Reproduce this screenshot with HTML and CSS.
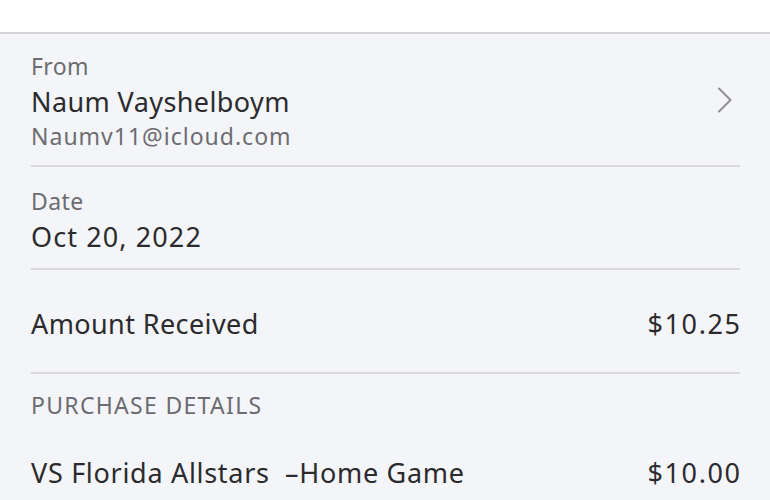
FILE: index.html
```html
<!DOCTYPE html>
<html lang="en">
<head>
<meta charset="utf-8">
<title>Payment details</title>
<link rel="stylesheet" href="styles.css">
</head>
<body>
<header class="topbar"></header>
<main class="details">
  <section class="block block-from">
    <div class="block-text">
      <div class="label">From</div>
      <div class="value">Naum Vayshelboym</div>
      <div class="sub">Naumv11@icloud.com</div>
    </div>
    <svg class="chevron" width="16" height="26" viewBox="0 0 16 26" aria-hidden="true">
      <path d="M2 1.5 L13.5 13 L2 24.5" fill="none" stroke="#8e8e93" stroke-width="2" stroke-linecap="round" stroke-linejoin="round"/>
    </svg>
  </section>
  <section class="block block-date">
    <div class="label">Date</div>
    <div class="value num">Oct 20, 2022</div>
  </section>
  <section class="block block-amount">
    <div class="value">Amount Received</div>
    <div class="value money">$10.25</div>
  </section>
  <section class="purchase">
    <div class="label caps">PURCHASE DETAILS</div>
    <div class="item-row">
      <div class="value item">VS Florida Allstars&nbsp; –Home Game</div>
      <div class="value money">$10.00</div>
    </div>
  </section>
</main>
</body>
</html>
```
FILE: styles.css
```css
html, body {
  margin: 0;
  padding: 0;
}
body {
  background: #f4f5f9;
  font-family: "Noto Sans", "Open Sans", sans-serif;
  color: #2b2b2e;
  width: 770px;
  height: 500px;
  overflow: hidden;
}
.topbar {
  height: 32px;
  background: #ffffff;
  border-bottom: 2px solid #d3d3d8;
}
.details {
  padding: 0 30px 0 31px;
}
.block {
  border-bottom: 2px solid #d9d9de;
}
.label {
  font-size: 23px;
  line-height: 30px;
  color: #6c6c70;
  letter-spacing: 0.4px;
}
.caps {
  letter-spacing: 1.3px;
}
.value {
  font-size: 27px;
  line-height: 36px;
  color: #2b2b2e;
  letter-spacing: 0.4px;
}
.num {
  letter-spacing: 1.1px;
}
.money {
  letter-spacing: 1.6px;
  margin-right: -1.6px;
}
.item {
  letter-spacing: 0.7px;
}
.sub {
  font-size: 23px;
  line-height: 32px;
  color: #6c6c70;
  letter-spacing: 1px;
}
.block-from {
  display: flex;
  align-items: center;
  justify-content: space-between;
  padding: 17px 0 13px;
}
.block-from .value {
  margin-top: 3px;
}
.chevron {
  margin-right: 7px;
  margin-top: -3px;
}
.block-date {
  padding: 19px 0 13px;
}
.block-date .value {
  margin-top: 3px;
}
.block-amount {
  display: flex;
  justify-content: space-between;
  padding: 36px 0 30px;
}
.purchase {
  padding-top: 16px;
}
.item-row {
  display: flex;
  justify-content: space-between;
  margin-top: 35px;
}
```
